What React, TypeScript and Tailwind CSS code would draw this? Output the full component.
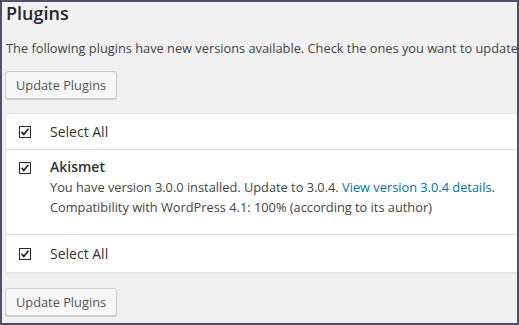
import React from 'react'

function CheckBox() {
  return (
    <svg width="12" height="12" viewBox="0 0 12 12" className="block shrink-0">
      <rect x="0.5" y="0.5" width="11" height="11" fill="#fff" stroke="#2b2b2b" />
      <path d="M2.5 5.8 L4.8 8.4 L9.4 2.8" fill="none" stroke="#1a1a1a" strokeWidth="1.6" />
    </svg>
  )
}

function UpdateButton() {
  return (
    <button className="h-[28px] rounded-[3px] border border-[#cccccc] bg-[#f7f7f7] px-[10px] text-[12.8px] leading-none text-[#555555] shadow-[0_1px_0_#cccccc]">
      Update Plugins
    </button>
  )
}

function SelectAllRow({ last }: { last?: boolean }) {
  return (
    <div className={`flex items-center ${last ? 'h-[37px]' : 'h-[36px] border-b border-[#e1e1e1]'}`}>
      <div className="flex w-[44px] justify-end pr-[19px]">
        <CheckBox />
      </div>
      <span className="text-[14px] text-[#333333]">Select All</span>
    </div>
  )
}

export default function App() {
  return (
    <div
      className="h-[325px] w-[519px] overflow-hidden border-2 border-[#50506a] bg-[#f1f1f1] pl-[3px] text-[#444444]"
      style={{ fontFamily: '"Open Sans", "Liberation Sans", sans-serif' }}
    >
      <h2 className="pl-px text-[18px] font-semibold leading-[22px] text-[#23282d]">Plugins</h2>
      <p className="mt-[14px] whitespace-nowrap pl-px text-[12.8px] leading-[20px]">
        The following plugins have new versions available. Check the ones you want to update
      </p>
      <div className="mt-[13px]">
        <UpdateButton />
      </div>
      <div className="mt-[14px] border border-r-0 border-[#e5e5e5] bg-white shadow-[0_1px_1px_rgba(0,0,0,0.04)]">
        <SelectAllRow />
        <div className="flex border-b border-[#e1e1e1] pb-[17px] pt-[7px]">
          <div className="flex w-[44px] justify-end pr-[19px] pt-[5px]">
            <CheckBox />
          </div>
          <div className="text-[12.8px] leading-[20px] text-[#444444]">
            <div className="text-[14px] font-semibold text-[#333333]">Akismet</div>
            <div>
              You have version 3.0.0 installed. Update to 3.0.4.{' '}
              <a className="text-[#0073aa]">View version 3.0.4 details</a>.
            </div>
            <div>Compatibility with WordPress 4.1: 100% (according to its author)</div>
          </div>
        </div>
        <SelectAllRow last />
      </div>
      <div className="mt-[15px]">
        <UpdateButton />
      </div>
    </div>
  )
}
